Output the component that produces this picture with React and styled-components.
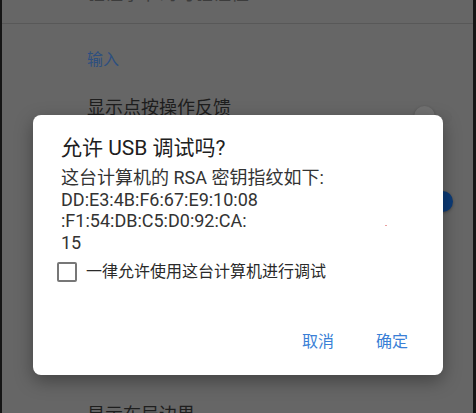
import React from "react";
import styled, { createGlobalStyle } from "styled-components";

const Global = createGlobalStyle`
  html, body { margin: 0; padding: 0; background: #151515; }
  body { font-family: Roboto, "Noto Sans CJK SC", "Noto Sans", sans-serif; }
`;

const Screen = styled.div`
  width: 476px;
  height: 413px;
  box-sizing: border-box;
  border-left: 2px solid #151515;
  border-right: 3px solid #151515;
  background: #666666;
  position: relative;
  overflow: hidden;
`;

const List = styled.div`
  display: flex;
  flex-direction: column;
`;

const TopItem = styled.div`
  height: 23px;
  padding-left: 85px;
  overflow: hidden;
`;

const TopText = styled.div`
  margin-top: -18px;
  font-size: 18px;
  line-height: 24px;
  color: #3c3c3c;
`;

const Divider = styled.div`
  height: 1px;
  background: #585858;
`;

const SectionHeader = styled.div`
  height: 60px;
  box-sizing: border-box;
  padding: 24px 0 0 85px;
  font-size: 16px;
  line-height: 24px;
  color: #2d4f80;
`;

const Item = styled.div`
  height: ${(p) => p.$h}px;
  box-sizing: border-box;
  padding: ${(p) => p.$pt ?? 12}px 21px 0 85px;
  display: flex;
  align-items: ${(p) => (p.$center ? "center" : "flex-start")};
  gap: 16px;
`;

const ItemText = styled.div`
  flex: 1;
  display: flex;
  flex-direction: column;
`;

const ItemTitle = styled.div`
  font-size: 18px;
  line-height: 24px;
  color: #1e1e1e;
`;

const ItemSummary = styled.div`
  font-size: 14px;
  line-height: 20px;
  color: #3a3a3a;
`;

const Switch = styled.div`
  width: 36px;
  height: 14px;
  border-radius: 7px;
  background: ${(p) => (p.$on ? "#234466" : "#646464")};
  position: relative;
  flex: none;
  align-self: ${(p) => (p.$top != null ? "flex-start" : "center")};
  margin-top: ${(p) => p.$top ?? 0}px;
`;

const Thumb = styled.div`
  position: absolute;
  top: -4px;
  left: ${(p) => (p.$on ? "16px" : "-2px")};
  width: 21px;
  height: 21px;
  border-radius: 50%;
  background: ${(p) => (p.$on ? "#0c3b77" : "#717171")};
  box-shadow: 0 1px 3px rgba(0, 0, 0, 0.3);
`;

const Dialog = styled.div`
  position: absolute;
  left: 31px;
  top: 115px;
  width: 410px;
  height: 260px;
  box-sizing: border-box;
  background: #ffffff;
  border-radius: 8px;
  box-shadow: 0 6px 18px rgba(0, 0, 0, 0.35);
  padding: 19px 0 0 0;
  display: flex;
  flex-direction: column;
`;

const Title = styled.div`
  padding-left: 28px;
  font-size: 21px;
  line-height: 28px;
  color: #202020;
`;

const Body = styled.div`
  margin-top: 5px;
  padding-left: 28px;
  font-size: 18px;
  line-height: 21.7px;
  color: #333333;
`;

const CheckRow = styled.label`
  margin-top: 8px;
  padding-left: 24px;
  display: flex;
  align-items: center;
  gap: 9px;
  height: 20px;
`;

const Box = styled.span`
  width: 16px;
  height: 16px;
  border: 2px solid #777777;
  border-radius: 2px;
  flex: none;
`;

const CheckText = styled.span`
  font-size: 16px;
  line-height: 20px;
  color: #2a2a2a;
`;

const Actions = styled.div`
  margin-top: 42px;
  display: flex;
  justify-content: flex-end;
  gap: 10px;
  padding-right: 19px;
`;

const TextButton = styled.button`
  border: none;
  background: none;
  padding: 0 16px;
  height: 36px;
  font-family: inherit;
  font-size: 16px;
  line-height: 36px;
  color: #3a7fd6;
  cursor: pointer;
`;

const Speck = styled.span`
  position: absolute;
  left: 352px;
  top: 110px;
  width: 2px;
  height: 1px;
  background: #e9a0a0;
`;

export default function App() {
  return (
    <>
      <Global />
      <Screen>
        <List>
          <TopItem>
            <TopText>验证字节码可验证性</TopText>
          </TopItem>
          <Divider />
          <SectionHeader>输入</SectionHeader>
          <Item $h={82}>
            <ItemText>
              <ItemTitle>显示点按操作反馈</ItemTitle>
              <ItemSummary>显示点按操作的视觉反馈</ItemSummary>
            </ItemText>
            <Switch $top={14}>
              <Thumb />
            </Switch>
          </Item>
          <Item $h={72} $pt={0} $center>
            <ItemText>
              <ItemTitle>指针位置</ItemTitle>
              <ItemSummary>屏幕叠加层显示当前触摸数据</ItemSummary>
            </ItemText>
            <Switch $on>
              <Thumb $on />
            </Switch>
          </Item>
          <SectionHeader>绘图</SectionHeader>
          <Item $h={93}>
            <ItemText>
              <ItemTitle>显示 Surface 更新</ItemTitle>
              <ItemSummary>窗口中的 Surface 更新时全部闪烁</ItemSummary>
            </ItemText>
          </Item>
          <Item $h={40}>
            <ItemText>
              <ItemTitle>显示布局边界</ItemTitle>
            </ItemText>
          </Item>
        </List>
        <Dialog>
          <Title>允许 USB 调试吗?</Title>
          <Body>
            这台计算机的 RSA 密钥指纹如下:
            <br />
            DD:E3:4B:F6:67:E9:10:08
            <br />
            :F1:54:DB:C5:D0:92:CA:
            <br />
            15
          </Body>
          <CheckRow>
            <Box />
            <CheckText>一律允许使用这台计算机进行调试</CheckText>
          </CheckRow>
          <Actions>
            <TextButton>取消</TextButton>
            <TextButton>确定</TextButton>
          </Actions>
          <Speck />
        </Dialog>
      </Screen>
    </>
  );
}
